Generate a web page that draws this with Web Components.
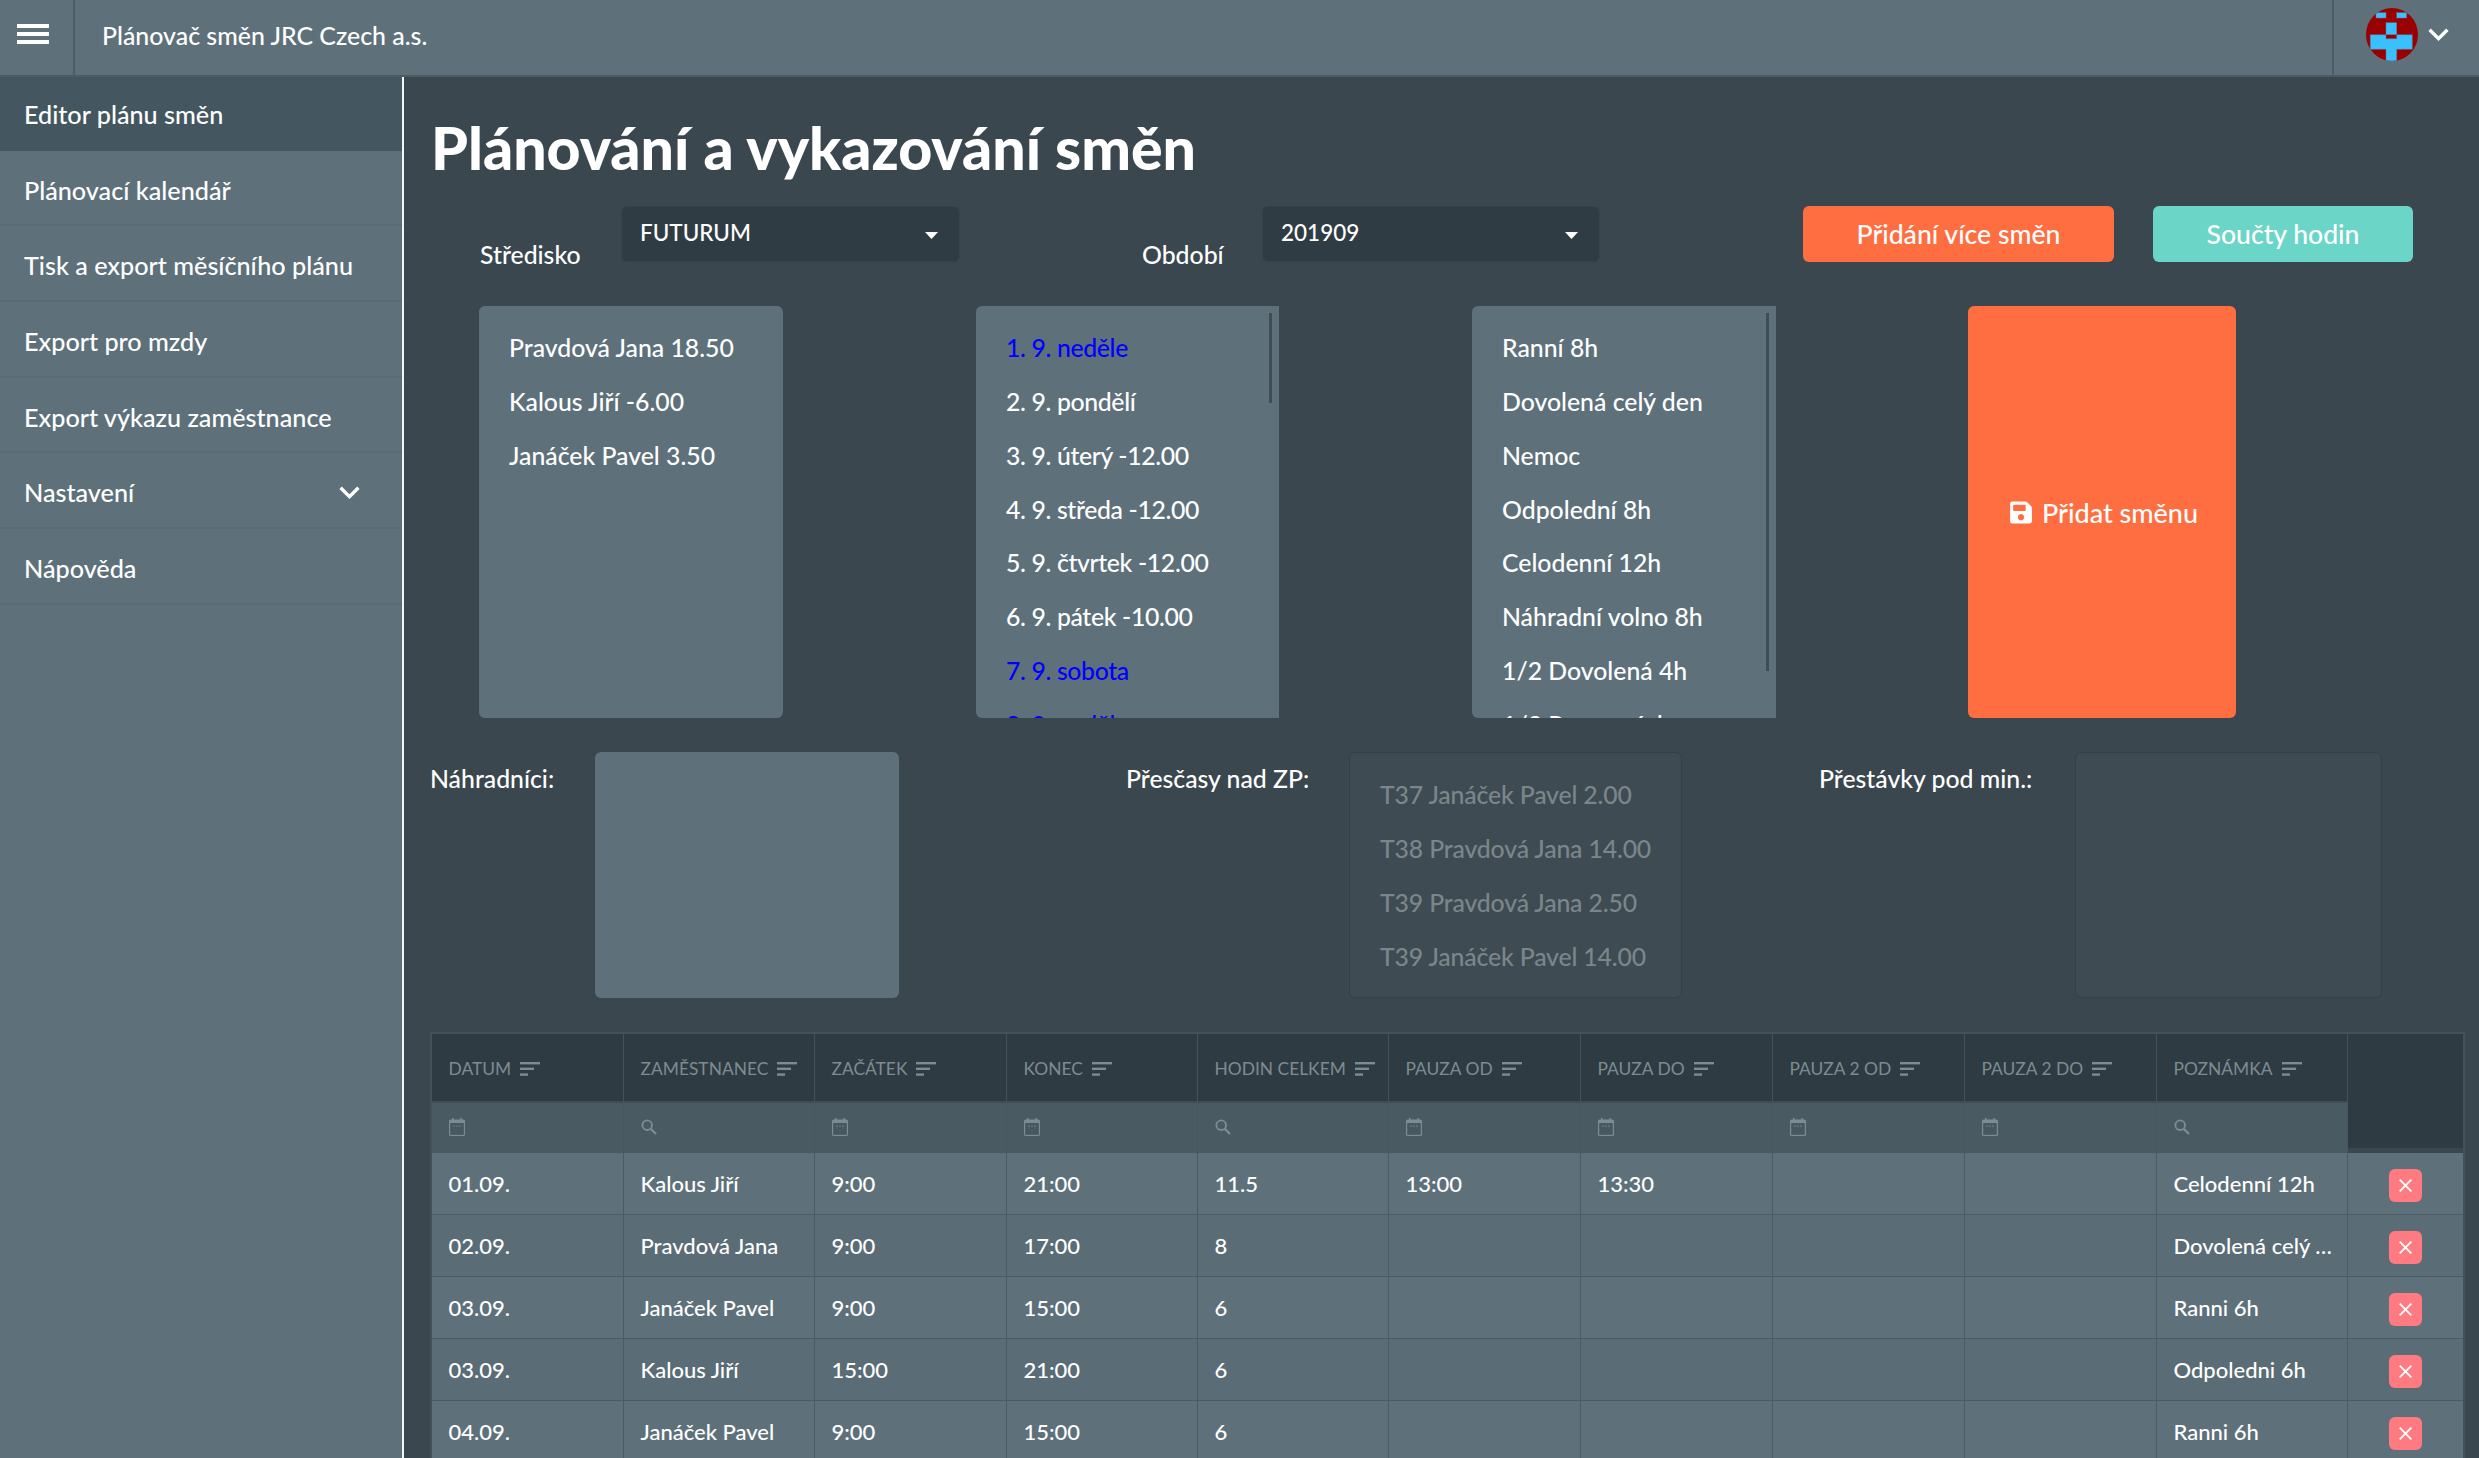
<!DOCTYPE html>
<html lang="cs"><head><meta charset="utf-8"><title>Plánovač směn</title>
<style>
html,body{margin:0;height:100%;overflow:hidden;background:#3b474e}
body{font-family:"Lato","Noto Sans",sans-serif;color:#fff;font-size:24px;font-weight:500}
</style></head><body>
<app-shell>
  <top-bar slot="top" title-text="Plánovač směn JRC Czech a.s."></top-bar>
  <side-nav slot="side">
    <nav-item active>Editor plánu směn</nav-item>
    <nav-item>Plánovací kalendář</nav-item>
    <nav-item>Tisk a export měsíčního plánu</nav-item>
    <nav-item>Export pro mzdy</nav-item>
    <nav-item>Export výkazu zaměstnance</nav-item>
    <nav-item expandable>Nastavení</nav-item>
    <nav-item>Nápověda</nav-item>
  </side-nav>
  <plan-page slot="main">
    <page-title>Plánování a vykazování směn</page-title>
    <filter-row>
      <field-label>Středisko</field-label>
      <drop-select>FUTURUM</drop-select>
      <i></i>
      <field-label>Období</field-label>
      <drop-select>201909</drop-select>
      <i></i>
      <action-button color="#ff6e40">Přidání více směn</action-button>
      <i></i>
      <action-button color="#6bd5c7">Součty hodin</action-button>
    </filter-row>
    <lists-row>
      <list-box>
        <list-item>Pravdová Jana 18.50</list-item>
        <list-item>Kalous Jiří -6.00</list-item>
        <list-item>Janáček Pavel 3.50</list-item>
      </list-box>
      <i></i>
      <list-box scroll thumb="90" style="letter-spacing:-.35px">
        <list-item weekend>1. 9. neděle</list-item>
        <list-item>2. 9. pondělí</list-item>
        <list-item>3. 9. úterý -12.00</list-item>
        <list-item>4. 9. středa -12.00</list-item>
        <list-item>5. 9. čtvrtek -12.00</list-item>
        <list-item>6. 9. pátek -10.00</list-item>
        <list-item weekend>7. 9. sobota</list-item>
        <list-item weekend>8. 9. neděle</list-item>
      </list-box>
      <i></i>
      <list-box scroll thumb="358">
        <list-item>Ranní 8h</list-item>
        <list-item>Dovolená celý den</list-item>
        <list-item>Nemoc</list-item>
        <list-item>Odpolední 8h</list-item>
        <list-item>Celodenní 12h</list-item>
        <list-item>Náhradní volno 8h</list-item>
        <list-item>1/2 Dovolená 4h</list-item>
        <list-item>1/2 Pracovní den</list-item>
      </list-box>
      <i></i>
      <action-button color="#ff6e40" icon="save" size="27px">Přidat směnu</action-button>
    </lists-row>
    <extras-row>
      <field-label>Náhradníci:</field-label>
      <list-box></list-box>
      <i></i>
      <field-label>Přesčasy nad ZP:</field-label>
      <list-box disabled style="letter-spacing:-.15px">
        <list-item>T37 Janáček Pavel 2.00</list-item>
        <list-item>T38 Pravdová Jana 14.00</list-item>
        <list-item>T39 Pravdová Jana 2.50</list-item>
        <list-item>T39 Janáček Pavel 14.00</list-item>
      </list-box>
      <i></i>
      <field-label>Přestávky pod min.:</field-label>
      <list-box disabled></list-box>
    </extras-row>
    <shift-table></shift-table>
  </plan-page>
</app-shell>
<script>
function def(name, css, html, setup){
  customElements.define(name, class extends HTMLElement{
    connectedCallback(){
      if(this.shadowRoot) return;
      const r=this.attachShadow({mode:'open'});
      r.innerHTML='<style>'+css+'</style>'+(typeof html==='function'?html(this):html);
      if(setup) setup(this,r);
    }
  });
}
const CHEV='<svg width="21" height="13" viewBox="0 0 21 13" fill="none" stroke="#fff" stroke-width="3.4"><path d="M1.6 1.8 10.5 10.6 19.4 1.8"/></svg>';

def('app-shell',`:host{display:grid;grid-template-columns:402px 2px 1fr;grid-template-rows:75px 1fr;height:100vh;overflow:hidden}
 .top{grid-column:1/4;position:relative;z-index:2;box-shadow:0 2px 0 #4a5b64}
 .side{min-height:0}.line{background:#f4f6f6;margin-top:2px}.main{min-width:0;min-height:0;overflow:hidden}`,
 `<div class="top"><slot name="top"></slot></div><div class="side"><slot name="side"></slot></div><div class="line"></div><div class="main"><slot name="main"></slot></div>`);

def('top-bar',`:host{display:flex;align-items:stretch;height:75px;background:#5e717b;color:#fff}
 .burger{width:75px;display:flex;flex-direction:column;justify-content:space-between;padding:24px 24.5px 31px 17px;box-sizing:border-box;border-right:2px solid #4b5d66;flex:none;height:75px}
 .burger b{display:block;height:3.6px;background:#fff}
 .title{flex:1;padding:0 0 6px 27px;display:flex;align-items:center;font-size:24.9px}
 .user{width:147px;border-left:2px solid #4b5d66;display:flex;align-items:center;gap:10px;padding-left:32px;box-sizing:border-box}
 .user svg.c{margin-top:-6px}.av{width:52px;height:53px;margin-top:-6px;flex:none}`,
 t=>`<div class="burger"><b></b><b></b><b></b></div><div class="title">${t.getAttribute('title-text')}</div>
 <div class="user"><svg class="av" viewBox="0 0 52 53"><defs><clipPath id="c"><ellipse cx="26" cy="26.5" rx="26" ry="26.5"/></clipPath></defs><g clip-path="url(#c)"><rect width="52" height="53" fill="#990000"/>
 <g fill="#39c0ff" stroke="#6f6f8a" stroke-width=".5"><rect x="10" y="4.7" width="10" height="5.3"/><rect x="30.7" y="4.7" width="10" height="5.3"/><rect x="20" y="14.7" width="10.7" height="12"/>
 <path d="M4.3 26.7H20v4h10.7v-4h15.6v14.6H30.7V53H20V41.3H4.3z"/></g></g></svg><svg class="c" width="21" height="13" viewBox="0 0 21 13" fill="none" stroke="#fff" stroke-width="3.4"><path d="M1.6 1.8 10.5 10.6 19.4 1.8"/></svg></div>`);

def('side-nav',`:host{display:flex;flex-direction:column;height:100%;background:#5e717b}`,`<slot></slot>`);

def('nav-item',`:host{display:flex;align-items:center;justify-content:space-between;height:75.7px;box-sizing:border-box;padding:4px 42px 0 24px;border-bottom:2px solid #596b75;color:#fff;font-size:25.2px;flex:none}
 :host([active]){background:#445761;border-bottom-color:#445761}`,
 t=>`<span><slot></slot></span>${t.hasAttribute('expandable')?CHEV:''}`);

def('plan-page',`:host{display:flex;flex-direction:column;height:100%;padding:0 0 0 28px;box-sizing:border-box;background:#3b474e}`,`<slot></slot>`);
def('page-title',`:host{display:block;font-size:59px;font-weight:900;line-height:64px;margin:41px 0 26px -1px;white-space:nowrap}`,`<slot></slot>`);

def('filter-row',`:host{--lbl:34px;display:grid;grid-template-columns:48px 141px 339px 182px 120px 338px 203px 311px 39px 260px;grid-template-rows:56px;height:56px;flex:none}
 ::slotted(field-label:first-child){grid-column:2}`,`<slot></slot>`);
def('lists-row',`:host{display:grid;grid-template-columns:304px 193px 303px 193px 304px 192px 268px;grid-template-rows:412px;margin:44px 0 0 47px;flex:none}`,`<slot></slot>`);
def('extras-row',`:host{--lbl:12px;display:grid;grid-template-columns:165px 304px 227px 223px 333px 137px 256px 307px;grid-template-rows:246px;margin:34px 0 0 -2px;flex:none}`,`<slot></slot>`);

def('field-label',`:host{display:block;font-size:24.8px;white-space:nowrap;padding-top:var(--lbl);line-height:30px}`,`<slot></slot>`);
def('drop-select',`:host{display:flex;align-items:flex-start;justify-content:space-between;background:#303c43;border:1px solid #35424a;border-radius:6px;padding:11px 21px 0 18px;box-sizing:border-box;font-size:22.5px;height:56px;line-height:30px}
 svg{margin-top:14px}`,
 `<span><slot></slot></span><svg width="13" height="7" viewBox="0 0 13 7"><path d="M0 0h13L6.5 7z" fill="#fff"/></svg>`);
def('action-button',`:host{display:flex;align-items:center;justify-content:center;gap:10px;border-radius:6px;color:#fff;font-size:26.6px;height:100%}`,
 t=>{const ic=t.getAttribute('icon');return `<style>:host{background:${t.getAttribute('color')};${t.getAttribute('size')?'font-size:'+t.getAttribute('size')+';padding-left:4px;box-sizing:border-box':''}}</style>`+(ic?`<svg width="22" height="25" viewBox="0 0 448 512"><path fill="#fff" d="M433.941 129.941l-83.882-83.882A48 48 0 0 0 316.118 32H48C21.49 32 0 53.49 0 80v352c0 26.51 21.49 48 48 48h352c26.51 0 48-21.49 48-48V163.882a48 48 0 0 0-14.059-33.941zM224 416c-35.346 0-64-28.654-64-64 0-35.346 28.654-64 64-64s64 28.654 64 64c0 35.346-28.654 64-64 64zm96-304.52V212c0 6.627-5.373 12-12 12H76c-6.627 0-12-5.373-12-12V108c0-6.627 5.373-12 12-12h228.52c3.183 0 6.235 1.264 8.485 3.515l3.48 3.48A11.996 11.996 0 0 1 320 111.48z"/></svg>`:'')+`<span><slot></slot></span>`;});

def('list-box',`:host{display:block;position:relative;background:#5e717b;border-radius:6px;overflow:hidden;padding:16px 0;box-sizing:border-box;height:100%}
 :host([scroll]){border-radius:6px 0 0 6px}
 :host([disabled]){background:#3e4b52;border:1.5px solid #343f46;color:#7b868b;padding:16px 0 14px}
 .thumb{position:absolute;right:7px;top:7px;width:3px;background:#3f4d55}`,
 t=>`<slot></slot>`+(t.hasAttribute('scroll')?`<div class="thumb" style="height:${t.getAttribute('thumb')}px"></div>`:''));
def('list-item',`:host{display:flex;align-items:center;height:53.75px;box-sizing:border-box;padding:0 0 2px 30px;font-size:24.8px;white-space:nowrap}
 :host([weekend]){color:#0000ff}`,`<slot></slot>`);

const SORT='<svg width="20" height="14" viewBox="0 0 20 14" fill="#7d8b92"><rect width="20" height="2.4"/><rect y="5.6" width="14" height="2.4"/><rect y="11.4" width="8" height="2.4"/></svg>';
const CAL='<svg width="16" height="18" viewBox="0 0 16 18"><path fill="#7d8b92" d="M3 0h1.6v1.5h6.8V0H13v1.5h1.5A1.5 1.5 0 0 1 16 3v13.5a1.5 1.5 0 0 1-1.5 1.5h-13A1.5 1.5 0 0 1 0 16.5V3a1.5 1.5 0 0 1 1.5-1.5H3z"/><rect x="1.2" y="5" width="13.6" height="11.8" fill="#465860"/><path fill="#7d8b92" d="M4.5 7.5h1.2v1.2H4.5zM7.4 7.5h1.2v1.2H7.4zM10.3 7.5h1.2v1.2h-1.2z"/></svg>';
const SEA='<svg width="16" height="16" viewBox="0 0 16 16" fill="none" stroke="#7d8b92" stroke-width="1.9"><circle cx="6.2" cy="6.2" r="4.8"/><path d="M9.8 9.8 15 15" stroke-width="2.4"/></svg>';
const X='<svg width="13" height="13" viewBox="0 0 13 13" stroke="#fff" stroke-width="1.9"><path d="M.7.7l11.6 11.6M12.3.7.7 12.3"/></svg>';
const HEAD=[['Datum',CAL],['Zaměstnanec',SEA],['Začátek',CAL],['Konec',CAL],['Hodin celkem',SEA],['Pauza od',CAL],['Pauza do',CAL],['Pauza 2 od',CAL],['Pauza 2 do',CAL],['Poznámka',SEA]];
const ROWS=[
 ['01.09.','Kalous Jiří','9:00','21:00','11.5','13:00','13:30','','','Celodenní 12h'],
 ['02.09.','Pravdová Jana','9:00','17:00','8','','','','','Dovolená celý den'],
 ['03.09.','Janáček Pavel','9:00','15:00','6','','','','','Ranni 6h'],
 ['03.09.','Kalous Jiří','15:00','21:00','6','','','','','Odpoledni 6h'],
 ['04.09.','Janáček Pavel','9:00','15:00','6','','','','','Ranni 6h'],
];
const COLS=[192,191,192,191,191,192,192,192,192,191,115];
def('shift-table',`:host{display:block;margin:34px 0 0 -2px;width:2035px;flex:none;border:2px solid #435159;border-bottom:0;box-sizing:border-box}
 table{border-collapse:separate;border-spacing:0;table-layout:fixed;width:2031px}
 th,td{padding:0 0 0 16.5px;box-sizing:border-box;text-align:left;overflow:hidden;white-space:nowrap;text-overflow:ellipsis}
 .h th{height:67px;background:#2f3b42;color:#7d8b92;font-weight:400;font-size:17.4px;text-transform:uppercase;border-right:1.5px solid #44535b}
 .h th span{vertical-align:middle}.h th svg{vertical-align:middle;margin-left:9px}
 .f th{height:52px;background:#4a5a62;border-right:1px solid #465760;border-top:2px solid #3f4d55;padding:0 0 3px 17px}
 .f svg{display:block}
 .end{background:#2f3b42!important;border:0!important;border-bottom:5px solid #3b474e!important;padding:0}
 td{height:62px;font-size:22px;color:#fff;background:#5e717b;border-right:1.5px solid #4a5b65;border-bottom:1.5px solid #4a5b65;padding-right:12px}
 tr:nth-child(even) td{background:#5a6c75}
 td.del{padding:3px 0 0;text-overflow:clip;border-right:0}
 .b{display:flex;width:33px;height:33px;margin:0 0 0 41px;border-radius:6px;background:#ff7b81;align-items:center;justify-content:center}`,
 ()=>`<table><colgroup>${COLS.map(w=>`<col style="width:${w}px">`).join('')}</colgroup><thead>
 <tr class="h">${HEAD.map(h=>`<th><span>${h[0]}</span>${SORT}</th>`).join('')}<th class="end" rowspan="2"></th></tr>
 <tr class="f">${HEAD.map(h=>`<th>${h[1]}</th>`).join('')}</tr></thead>
 <tbody>${ROWS.map(r=>`<tr>${r.map(c=>`<td>${c}</td>`).join('')}<td class="del"><div class="b">${X}</div></td></tr>`).join('')}</tbody></table>`);
</script>
</body></html>
